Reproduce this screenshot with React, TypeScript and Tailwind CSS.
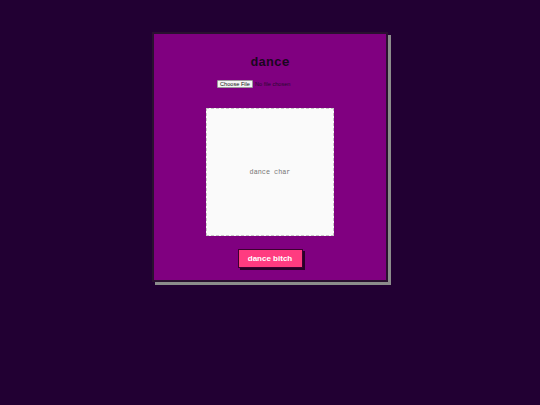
export default function App() {
  return (
    <div className="min-h-screen w-full bg-[#220033] flex justify-center pt-[32px]">
      <div className="w-[236px] h-[250px] bg-[#800080] border-2 border-[#2a1030] shadow-[3px_3px_0_#8c8c8c] flex flex-col items-center pt-[21px]">
        <h1 className="font-[family-name:'Liberation_Mono',monospace] font-bold text-[13px] leading-[16px] text-[#1a0620]">
          dance
        </h1>

        {/* file picker, drawn small like the rest of the card */}
        <div className="mt-[9px] w-[106px] flex items-center gap-[2px] font-[family-name:'Liberation_Sans',Arial,sans-serif] text-[5.6px] leading-[8px]">
          <span className="h-[8px] w-[36px] bg-[#f4f4f4] border border-[#9a9a9a] rounded-[1px] flex items-center justify-center text-[#111]">
            Choose File
          </span>
          <span className="text-[#2a0a30]">No file chosen</span>
        </div>

        <div className="mt-[20px] w-[128px] h-[128px] bg-[#fafafa] border border-dashed border-[#c8c8c8] flex items-center justify-center">
          <span className="font-[family-name:'Liberation_Mono',monospace] text-[6.8px] text-[#777]">dance char</span>
        </div>

        <button className="mt-[13px] w-[65px] h-[19px] bg-[#ff3b80] border border-[#3d0030] shadow-[2px_2px_0_#2a0028] font-[family-name:'Liberation_Sans',Arial,sans-serif] font-bold text-[8px] text-white flex items-center justify-center">
          dance bitch
        </button>
      </div>
    </div>
  );
}
